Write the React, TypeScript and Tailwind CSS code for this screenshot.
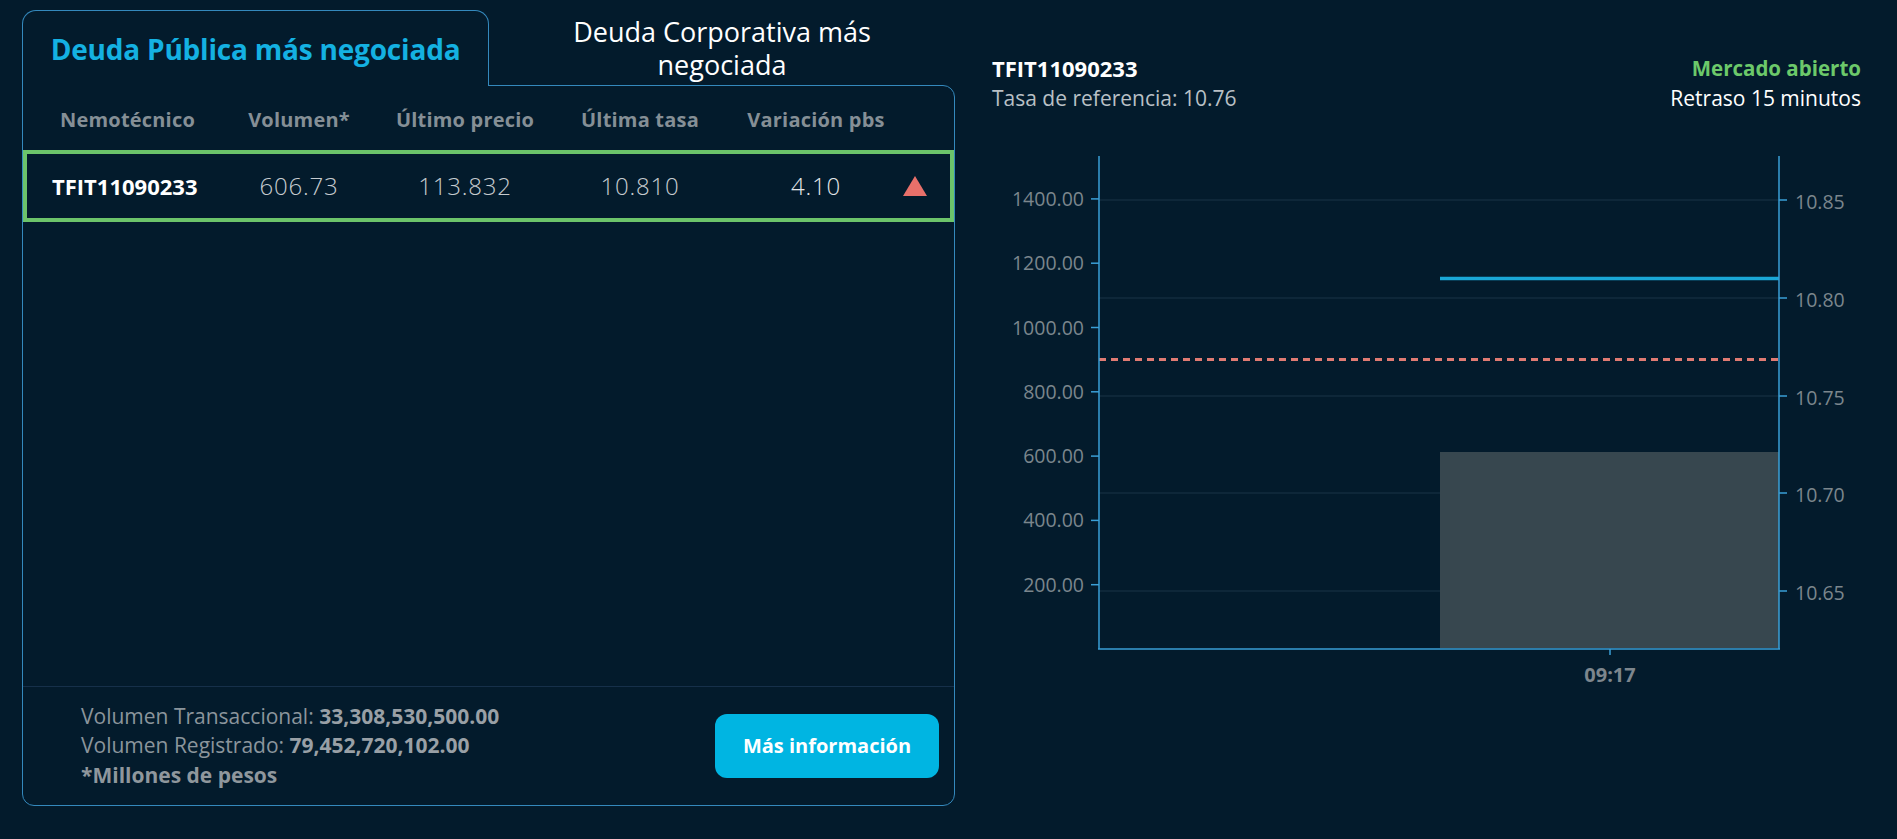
import React from 'react';

const font = "font-['Open_Sans','Liberation_Sans',sans-serif]";

const leftTicks = [1400, 1200, 1000, 800, 600, 400, 200];
const rightTicks = [
  { label: '10.85', y: 60 },
  { label: '10.80', y: 158 },
  { label: '10.75', y: 256 },
  { label: '10.70', y: 353 },
  { label: '10.65', y: 451 },
];

const yLeft = (v: number) => 509 - (v / 200) * 64.3;

const Chart: React.FC = () => (
  <svg width={869} height={560} viewBox="0 0 869 560" fontFamily="'Open Sans', 'Liberation Sans', sans-serif">
    {rightTicks.map((t) => (
      <line key={'g' + t.label} x1={107} x2={787} y1={t.y} y2={t.y} stroke="#1b3447" strokeWidth={1} />
    ))}
    <rect x={448} y={312} width={339} height={196} fill="#37474f" />
    <line x1={448} x2={787} y1={138.5} y2={138.5} stroke="#1aa7d6" strokeWidth={3.5} />
    <line x1={107} x2={787} y1={219.5} y2={219.5} stroke="#e07b73" strokeWidth={3} strokeDasharray="7 5" />
    <line x1={107} x2={107} y1={16} y2={509} stroke="#3a9fd6" strokeWidth={1.5} />
    <line x1={787} x2={787} y1={16} y2={509} stroke="#3a9fd6" strokeWidth={1.5} />
    <line x1={106} x2={788} y1={509} y2={509} stroke="#3a9fd6" strokeWidth={1.5} />
    <line x1={618} x2={618} y1={509} y2={515} stroke="#3a9fd6" strokeWidth={1.5} />
    {leftTicks.map((v) => (
      <g key={v}>
        <line x1={99} x2={107} y1={yLeft(v)} y2={yLeft(v)} stroke="#3a9fd6" strokeWidth={1.5} />
        <text x={92} y={yLeft(v) + 7} textAnchor="end" fontSize={19.5} fill="#7b868d">
          {v.toFixed(2)}
        </text>
      </g>
    ))}
    {rightTicks.map((t) => (
      <g key={t.label}>
        <line x1={787} x2={795} y1={t.y} y2={t.y} stroke="#3a9fd6" strokeWidth={1.5} />
        <text x={803} y={t.y + 9} fontSize={19.5} fill="#7b868d">
          {t.label}
        </text>
      </g>
    ))}
    <text x={618} y={542} textAnchor="middle" fontSize={20} fontWeight={700} fill="#7d868d">
      09:17
    </text>
  </svg>
);

export default function App() {
  return (
    <div className={`w-[1897px] h-[839px] bg-[#031b2c] flex ${font}`}>
      {/* panel izquierdo */}
      <div className="ml-[22px] mt-[10px] w-[933px] flex flex-col">
        <div className="flex h-[75px]">
          <div className="relative z-10 -mb-px w-[467px] bg-[#031b2c] border border-b-0 border-[#3489bd] rounded-t-[14px] flex items-center justify-center">
            <span className="text-[28px] font-bold text-[#14b1e2] tracking-[-0.2px]">Deuda Pública más negociada</span>
          </div>
          <div className="flex-1 flex items-center justify-center text-center text-white text-[27px] leading-[33px]">
            Deuda Corporativa más
            <br />
            negociada
          </div>
        </div>
        <div className="h-[721px] border border-[#3489bd] rounded-tr-[12px] rounded-b-[12px] flex flex-col">
          <div className="h-[64px] pt-[3px] flex items-center text-[20px] font-bold text-[#858f96] tracking-[0.2px]">
            <div className="w-[192px] pl-[37px]">Nemotécnico</div>
            <div className="w-[168px] text-center">Volumen*</div>
            <div className="w-[164px] text-center">Último precio</div>
            <div className="w-[186px] text-center">Última tasa</div>
            <div className="w-[166px] text-center">Variación pbs</div>
          </div>
          <div className="h-[72px] border-4 border-[#6cc46a] flex items-center text-[#c6cbcf] text-[24px] font-light tracking-[0.8px]">
            <div className="w-[188px] pl-[25px] text-[22px] font-bold tracking-normal text-white">TFIT11090233</div>
            <div className="w-[168px] text-center">606.73</div>
            <div className="w-[164px] text-center">113.832</div>
            <div className="w-[186px] text-center">10.810</div>
            <div className="w-[166px] text-center text-[#e2e5e8]">4.10</div>
            <div className="w-[32px] flex justify-center">
              <svg width="24" height="20" viewBox="0 0 24 20">
                <polygon points="12,0 24,20 0,20" fill="#e8706a" />
              </svg>
            </div>
          </div>
          <div className="flex-1" />
          <div className="h-[119px] border-t border-[#16304a] flex items-center justify-between pl-[58px] pr-[15px]">
            <div className="text-[21px] leading-[29.5px] text-[#8b959c]">
              <div>
                Volumen Transaccional: <span className="font-bold text-[#99a0a6]">33,308,530,500.00</span>
              </div>
              <div>
                Volumen Registrado: <span className="font-bold text-[#99a0a6]">79,452,720,102.00</span>
              </div>
              <div className="font-bold text-[#8f979d]">*Millones de pesos</div>
            </div>
            <button className="w-[224px] h-[64px] rounded-[12px] bg-[#00b5e2] text-white text-[20px] font-bold">
              Más información
            </button>
          </div>
        </div>
      </div>

      {/* gráfico */}
      <div className="ml-[37px] w-[869px] pt-[53px] flex flex-col">
        <div className="flex justify-between text-[21px] leading-[30px]">
          <div>
            <div className="font-bold text-[22px] text-white">TFIT11090233</div>
            <div className="text-[#b9c0c6]">Tasa de referencia: 10.76</div>
          </div>
          <div className="text-right">
            <div className="font-bold text-[20.5px] text-[#6cc96a]">Mercado abierto</div>
            <div className="text-white">Retraso 15 minutos</div>
          </div>
        </div>
        <div className="mt-[27px]">
          <Chart />
        </div>
      </div>
    </div>
  );
}
